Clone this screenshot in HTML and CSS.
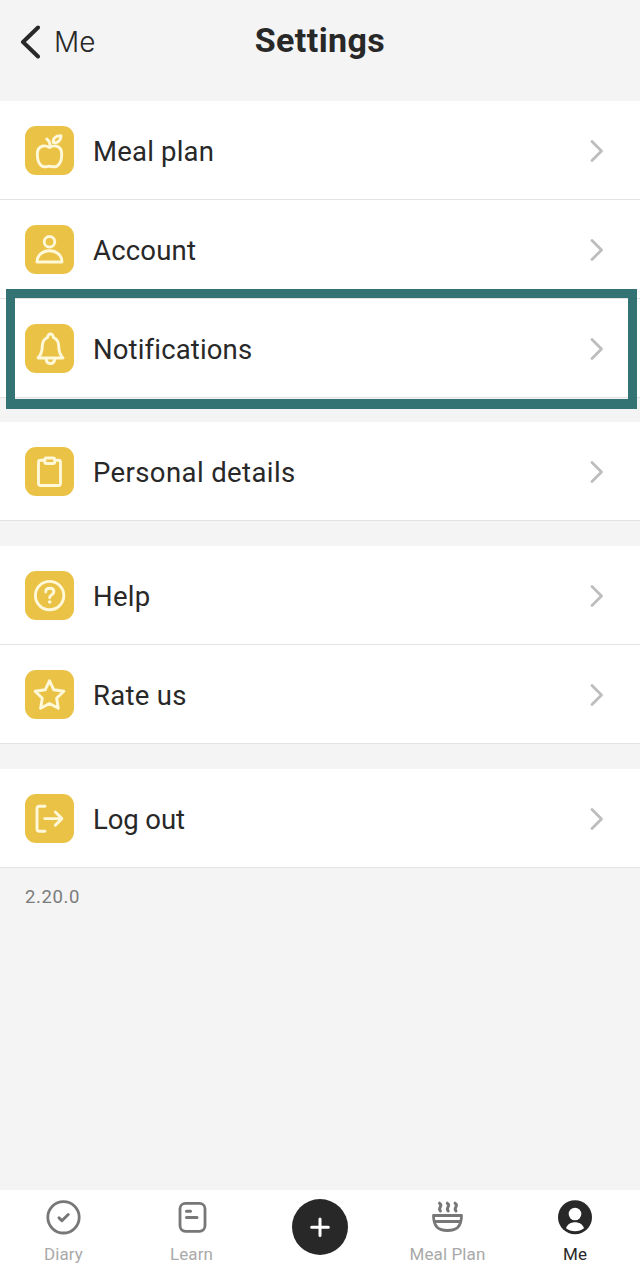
FILE: index.html
```
<!DOCTYPE html>
<html lang="en">
<head>
    <meta charset="UTF-8">
    <meta name="viewport" content="width=device-width, initial-scale=1.0">
    <title>Settings</title>
    <link rel="stylesheet" href="styles.css">
</head>
<body>

<svg class="sprite" width="0" height="0">
    <symbol id="chevron" viewBox="0 0 14 24">
        <path d="M2 2.500l9.500 9.500L2 21.500"/>
    </symbol>
</svg>

<header class="header">
    <a class="back">
        <svg class="back-icon" width="22" height="34" viewBox="0 0 22 34"><path d="M20 2.500L5 17l15 14.500"/></svg>
        <span>Me</span>
    </a>
    <h1>Settings</h1>
</header>

<main class="content">
    <section class="group">
        <div class="row">
            <svg class="icon" viewBox="0 0 49 49">
                <path d="M24.500 21.500c-2.300-1.300-4.500-1.900-6.500-1.500-4 .8-5.700 4-5.700 8.500 0 5 1.700 9.500 4.500 11.500 2.500 1.700 5 .3 7.700.3s5.200 1.400 7.700-.3c2.800-2 4.500-6.500 4.500-11.500 0-4.500-1.700-7.700-5.700-8.500-2-.4-4.200.2-6.500 1.500z"/>
                <path d="M25 20.500c.2-3.300-.9-5.800-3.300-7.500M28.300 16.500c-.6-4 2.400-7 7.700-6.800.2 4.500-3 7.600-7.700 6.800z"/>
            </svg>
            <span class="label label-meal">Meal plan</span>
            <svg class="chevron"><use href="#chevron"/></svg>
        </div>
        <div class="row">
            <svg class="icon" viewBox="0 0 49 49">
                <circle cx="24.500" cy="16.800" r="5.300"/>
                <path d="M12 37c0-6.800 5.500-11.300 12.500-11.300S37 30.200 37 37z"/>
            </svg>
            <span class="label label-account">Account</span>
            <svg class="chevron"><use href="#chevron"/></svg>
        </div>
        <div class="row highlighted">
            <svg class="icon" viewBox="0 0 49 49">
                <path d="M13 34c3-3.200 4.200-5.500 4.200-11 0-4.700 1.800-8.100 5.300-9.400.4-2.300 1.300-3.600 3-3.600s2.600 1.300 3 3.600c3.500 1.300 5.300 4.700 5.300 9.400 0 5.500 1.200 7.800 4.200 11z"/>
                <path d="M21 34.500c.3 3.200 2 5 4.400 5s4.100-1.800 4.400-5"/>
            </svg>
            <span class="label label-notifications">Notifications</span>
            <svg class="chevron"><use href="#chevron"/></svg>
        </div>
    </section>

    <section class="group">
        <div class="row">
            <svg class="icon" viewBox="0 0 49 49">
                <path d="M19 13.300h-3.500c-1.200 0-2 .8-2 2V36.500c0 1.200.8 2 2 2h18c1.200 0 2-.8 2-2V15.300c0-1.200-.8-2-2-2H30"/>
                <rect x="19.800" y="11" width="9.900" height="5.500" rx="1.500"/>
            </svg>
            <span class="label label-personal">Personal details</span>
            <svg class="chevron"><use href="#chevron"/></svg>
        </div>
    </section>

    <section class="group">
        <div class="row">
            <svg class="icon" viewBox="0 0 49 49">
                <circle cx="24.600" cy="24.600" r="14.200"/>
                <path d="M20.700 21c0-2.300 1.700-3.700 4.100-3.700s4.100 1.400 4.100 3.500c0 2.900-4.200 2.900-4.200 6"/>
                <circle class="dot" cx="24.700" cy="31" r="1.800"/>
            </svg>
            <span class="label label-help">Help</span>
            <svg class="chevron"><use href="#chevron"/></svg>
        </div>
        <div class="row">
            <svg class="icon" viewBox="0 0 49 49">
                <path d="M24.500 10.700l4.300 9.100 10.100 1.400-7.300 7 1.700 10.100-8.800-4.800-8.900 4.800 1.700-10.100-7.200-7 10.100-1.400z"/>
            </svg>
            <span class="label label-rate">Rate us</span>
            <svg class="chevron"><use href="#chevron"/></svg>
        </div>
    </section>

    <section class="group">
        <div class="row">
            <svg class="icon" viewBox="0 0 49 49">
                <path d="M20 12.300h-5.500c-1.500 0-2.500 1-2.500 2.500v20c0 1.500 1 2.500 2.500 2.500H20M19.700 24.600h17M30.300 18l6.600 6.600-6.600 6.600"/>
            </svg>
            <span class="label label-logout">Log out</span>
            <svg class="chevron"><use href="#chevron"/></svg>
        </div>
    </section>

    <p class="version">2.20.0</p>
</main>

<nav class="tabbar">
    <a class="tab">
        <svg width="36" height="36" viewBox="0 0 36 36">
            <circle cx="17.500" cy="18.300" r="15.700"/>
            <path class="thick" d="M13 18.900l2.900 2.800 6.300-6.200"/>
        </svg>
        <span>Diary</span>
    </a>
    <a class="tab">
        <svg width="36" height="36" viewBox="0 0 36 36">
            <rect x="6" y="4.300" width="25" height="28" rx="5.500"/>
            <path class="thick" d="M12.500 12.300h4M12.500 18.500H23"/>
        </svg>
        <span>Learn</span>
    </a>
    <a class="tab tab-add">
        <svg width="56" height="56" viewBox="0 0 56 56"><path d="M28 20v16.500M19.700 28.200h16.600"/></svg>
    </a>
    <a class="tab">
        <svg width="36" height="36" viewBox="0 0 36 36">
            <path d="M3.500 16.500h28c0 5-.9 8.800-3.600 11.800-2.300 2.300-5.200 3.200-10.400 3.200s-8.100-.9-10.400-3.200c-2.700-3-3.600-6.800-3.600-11.800zM4.500 22.500h26"/>
            <path class="thick" d="M9.500 4.200c4.200 2.600-2.300 4.600.9 7.800M17.300 4.200c4.200 2.600-2.300 4.600.9 7.800M25.100 4.200c4.200 2.600-2.300 4.600.9 7.800"/>
        </svg>
        <span>Meal Plan</span>
    </a>
    <a class="tab tab-active">
        <svg width="36" height="36" viewBox="0 0 36 36">
            <circle class="disc" cx="17" cy="18.300" r="17"/>
            <circle class="person" cx="17" cy="15" r="6.300"/>
            <path class="person" d="M8 29.300c1.300-4 4.900-6 9-6s7.700 2 9 6c-2.500 2.100-5.500 3-9 3s-6.500-.9-9-3z"/>
        </svg>
        <span>Me</span>
    </a>
</nav>

</body>
</html>
```
FILE: styles.css
```
* {
    box-sizing: border-box;
}

body {
    display: flex;
    flex-direction: column;
    margin: 0;
    height: 1280px;
    background-color: #f4f4f4;
    color: #282828;
    font-family: Roboto, "Noto Sans", sans-serif;
}

svg {
    fill: none;
    stroke-linecap: round;
    stroke-linejoin: round;
}

.sprite {
    display: none;
}

/* Header */
.header {
    display: grid;
    grid-template-columns: 1fr auto 1fr;
    height: 101px;
    padding: 20px 18px 0;
}

.back {
    display: flex;
    gap: 14px;
    height: 43px;
    align-items: center;
    font-family: Inter, sans-serif;
    font-size: 28px;
    font-weight: 300;
}

.back-icon {
    stroke: #282828;
    stroke-width: 4;
}

h1 {
    margin: 0;
    font-size: 34px;
    line-height: 40px;
    font-weight: 700;
    letter-spacing: 0.4px;
}

/* Settings list */
.content {
    flex: 1;
}

.group {
    margin-bottom: 25px;
    background-color: white;
}

.group:first-child {
    margin-bottom: 24px;
}

.row {
    position: relative;
    display: flex;
    align-items: center;
    height: 99px;
    padding: 1px 36px 0 25px;
    border-bottom: 1px solid #e2e2e2;
}

.highlighted::after {
    content: "";
    box-sizing: border-box;
    position: absolute;
    top: -10px;
    left: 6px;
    right: 3px;
    height: 120px;
    border: 9px solid #337374;
    border-bottom-width: 10px;
}

.icon {
    width: 49px;
    height: 49px;
    border-radius: 11px;
    background-color: #eac246;
    stroke: #fff8d9;
    stroke-width: 2.9;
}

.icon .dot {
    fill: #fff8d9;
    stroke: none;
}

.label {
    flex: 1;
    margin-left: 19px;
    padding-top: 3px;
    font-size: 27.5px;
    line-height: 34px;
    letter-spacing: 0.2px;
}

.label-notifications {
    letter-spacing: 0.15px;
}

.label-personal {
    letter-spacing: 0.4px;
}

.label-help,
.label-rate {
    letter-spacing: 0.3px;
}

.label-logout {
    letter-spacing: -0.1px;
}

.chevron {
    width: 14px;
    height: 24px;
    stroke: #bdbdbd;
    stroke-width: 2.8;
}

.version {
    margin: -8px 0 0 25px;
    color: #7b7b7b;
    font-size: 18.5px;
    line-height: 24px;
    letter-spacing: 0.6px;
}

/* Bottom tabs */
.tabbar {
    display: grid;
    grid-template-columns: repeat(5, 1fr);
    height: 90px;
    padding-top: 9px;
    background-color: white;
}

.tab {
    display: flex;
    flex-direction: column;
    align-items: center;
    gap: 9px;
    color: #a9a9a9;
    font-size: 17px;
    line-height: 20px;
    letter-spacing: 0.1px;
}

.tab span {
    margin-right: 1px;
}

.tab svg {
    stroke: #777777;
    stroke-width: 2.8;
}

.tab .thick {
    stroke-width: 3;
}

.tab-add svg {
    border-radius: 50%;
    background-color: #282828;
    stroke: white;
    stroke-width: 3;
}

.tab-active {
    color: #282828;
}

.tab-active span {
    margin-right: 2px;
}

.tab-active svg {
    stroke: none;
}

.disc {
    fill: #282828;
}

.person {
    fill: white;
}
```
